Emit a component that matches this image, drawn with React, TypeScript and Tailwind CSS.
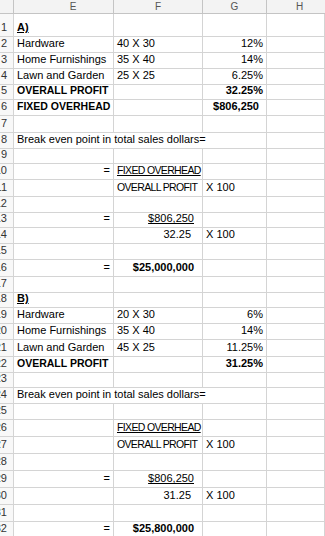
import React from "react";

// Excel-style sheet, columns E..H, rows 1..32
const grid = "grid grid-cols-[14px_100px_89px_64px_1fr]";
const line = "border-r border-b border-[#d4d4d4]";
const cell = `flex items-end pb-[2px] leading-[13px] overflow-hidden whitespace-nowrap text-[11px] text-black ${line}`;

type CellProps = { children?: React.ReactNode; className?: string };

const C = ({ children, className = "" }: CellProps) => (
  <div className={`${cell} ${className}`}>{children}</div>
);

// left aligned text, right aligned numbers
const L = ({ children, className = "" }: CellProps) => (
  <C className={`pl-[3px] ${className}`}>{children}</C>
);
const R = ({ children, className = "" }: CellProps) => (
  <C className={`justify-end pr-[3px] ${className}`}>{children}</C>
);

const Caps = ({ children }: { children: React.ReactNode }) => (
  <span className="text-[10.5px] tracking-[-0.65px]">{children}</span>
);
const BoldCaps = ({ children }: { children: React.ReactNode }) => (
  <span className="text-[10.5px] font-bold">{children}</span>
);

type RowProps = {
  n: number;
  h: string;
  e?: React.ReactNode;
  f?: React.ReactNode;
  g?: React.ReactNode;
  wide?: React.ReactNode;
};

function Row({ n, h, e, f, g, wide }: RowProps) {
  return (
    <div className={`${grid} ${h}`}>
      <div className={`flex items-end justify-end pr-[6px] pb-[2px] leading-[13px] overflow-hidden whitespace-nowrap text-[11px] text-[#333] bg-[#f8f8f8] ${line}`}>
        {n}
      </div>
      {wide ? (
        <L className="col-span-3">{wide}</L>
      ) : (
        <>
          {e ?? <C />}
          {f ?? <C />}
          {g ?? <C />}
        </>
      )}
      <C />
    </div>
  );
}

const equals = <R>=</R>;
const x100 = <L>X 100</L>;
const breakEven = "Break even point in total sales dollars=";

export default function App() {
  return (
    <div className="h-[536px] w-[325px] overflow-hidden bg-white font-['Liberation_Sans',Arial,sans-serif]">
      {/* column letters */}
      <div className={`${grid} h-[14px] bg-[#f3f3f3] text-[10px] text-[#555]`}>
        <div className="border-r border-b border-[#c4c4c4]" />
        <div className="flex items-center justify-center pl-[19px] leading-[12px] border-r border-b border-[#c4c4c4]">E</div>
        <div className="flex items-center justify-center leading-[12px] border-r border-b border-[#c4c4c4]">F</div>
        <div className="flex items-center justify-center leading-[12px] border-r border-b border-[#c4c4c4]">G</div>
        <div className="flex items-center pl-[29px] leading-[12px] border-b border-[#c4c4c4]">H</div>
      </div>

      <Row n={1} h="h-[23px]" e={<L className="font-bold underline">A)</L>} />
      <Row n={2} h="h-[16px]" e={<L>Hardware</L>} f={<L>40 X 30</L>} g={<R>12%</R>} />
      <Row n={3} h="h-[16px]" e={<L>Home Furnishings</L>} f={<L>35 X 40</L>} g={<R>14%</R>} />
      <Row n={4} h="h-[16px]" e={<L>Lawn and Garden</L>} f={<L>25 X 25</L>} g={<R>6.25%</R>} />
      <Row n={5} h="h-[15px]" e={<L><BoldCaps>OVERALL PROFIT</BoldCaps></L>} g={<R className="font-bold">32.25%</R>} />
      <Row n={6} h="h-[16px]" e={<L><BoldCaps>FIXED OVERHEAD</BoldCaps></L>} g={<R className="font-bold pr-[7px]">$806,250</R>} />
      <Row n={7} h="h-[17px]" />
      <Row n={8} h="h-[16px]" wide={breakEven} />
      <Row n={9} h="h-[15px]" />
      <Row n={10} h="h-[16px]" e={equals} f={<L className="underline"><Caps>FIXED OVERHEAD</Caps></L>} />
      <Row n={11} h="h-[17px]" f={<L><Caps>OVERALL PROFIT</Caps></L>} g={x100} />
      <Row n={12} h="h-[16px]" />
      <Row n={13} h="h-[15px]" e={equals} f={<R className="pr-[8px] underline">$806,250</R>} />
      <Row n={14} h="h-[16px]" f={<R className="pr-[11px]">32.25</R>} g={x100} />
      <Row n={15} h="h-[16px]" />
      <Row n={16} h="h-[17px]" e={equals} f={<R className="pr-[8px] font-bold">$25,000,000</R>} />
      <Row n={17} h="h-[16px]" />
      <Row n={18} h="h-[15px]" e={<L className="font-bold underline">B)</L>} />
      <Row n={19} h="h-[16px]" e={<L>Hardware</L>} f={<L>20 X 30</L>} g={<R>6%</R>} />
      <Row n={20} h="h-[16px]" e={<L>Home Furnishings</L>} f={<L>35 X 40</L>} g={<R>14%</R>} />
      <Row n={21} h="h-[17px]" e={<L>Lawn and Garden</L>} f={<L>45 X 25</L>} g={<R>11.25%</R>} />
      <Row n={22} h="h-[16px]" e={<L><BoldCaps>OVERALL PROFIT</BoldCaps></L>} g={<R className="font-bold">31.25%</R>} />
      <Row n={23} h="h-[15px]" />
      <Row n={24} h="h-[16px]" wide={breakEven} />
      <Row n={25} h="h-[16px]" />
      <Row n={26} h="h-[17px]" f={<L className="underline"><Caps>FIXED OVERHEAD</Caps></L>} />
      <Row n={27} h="h-[17px]" f={<L><Caps>OVERALL PROFIT</Caps></L>} g={x100} />
      <Row n={28} h="h-[17px]" />
      <Row n={29} h="h-[17px]" e={equals} f={<R className="pr-[8px] underline">$806,250</R>} />
      <Row n={30} h="h-[17px]" f={<R className="pr-[11px]">31.25</R>} g={x100} />
      <Row n={31} h="h-[17px]" />
      <Row n={32} h="h-[16px]" e={equals} f={<R className="pr-[8px] font-bold">$25,800,000</R>} />
    </div>
  );
}
